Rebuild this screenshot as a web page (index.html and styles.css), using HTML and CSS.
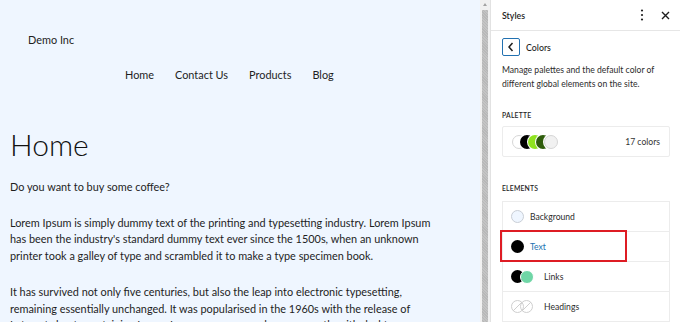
FILE: index.html
```html
<!DOCTYPE html>
<html lang="en">
<head>
    <meta charset="UTF-8">
    <title>Demo Inc - Styles</title>
    <link rel="stylesheet" href="styles.css">
</head>
<body>
    <div class="editor">
        <main class="canvas">
            <div class="site-title">Demo Inc</div>
            <nav class="site-nav">
                <a href="#">Home</a>
                <a href="#">Contact Us</a>
                <a href="#">Products</a>
                <a href="#">Blog</a>
            </nav>
            <h1 class="page-title">Home</h1>
            <p>Do you want to buy some coffee?</p>
            <p>Lorem Ipsum is simply dummy text of the printing and typesetting industry. Lorem Ipsum has been the industry's standard dummy text ever since the 1500s, when an unknown printer took a galley of type and scrambled it to make a type specimen book.</p>
            <p>It has survived not only five centuries, but also the leap into electronic typesetting, remaining essentially unchanged. It was popularised in the 1960s with the release of Letraset sheets containing Lorem Ipsum passages, and more recently with desktop publishing software.</p>
        </main>

        <div class="scrollbar">
            <div class="scroll-arrow"></div>
            <div class="scroll-thumb"></div>
        </div>

        <aside class="sidebar">
            <div class="sidebar-header">
                <span class="sidebar-title">Styles</span>
                <div class="header-actions">
                    <span class="kebab">
                        <svg width="4" height="12" viewBox="0 0 4 12"><circle cx="2" cy="1.5" r="1.1" fill="#1e1e1e"/><circle cx="2" cy="6" r="1.1" fill="#1e1e1e"/><circle cx="2" cy="10.5" r="1.1" fill="#1e1e1e"/></svg>
                    </span>
                    <span class="close">
                        <svg width="9" height="9" viewBox="0 0 9 9"><path d="M1 1 L8 8 M8 1 L1 8" stroke="#1e1e1e" stroke-width="1.4"/></svg>
                    </span>
                </div>
            </div>

            <div class="panel">
                <div class="panel-nav">
                    <button class="back-btn">
                        <svg width="8" height="10" viewBox="0 0 8 10"><path d="M5.5 1 L2 5 L5.5 9" fill="none" stroke="#1e1e1e" stroke-width="1.5"/></svg>
                    </button>
                    <span class="panel-title">Colors</span>
                </div>
                <p class="panel-desc">Manage palettes and the default color of different global elements on the site.</p>

                <div class="section-label">Palette</div>
                <div class="palette-box">
                    <div class="palette-swatches">
                        <span class="dot dot-white"></span>
                        <span class="dot dot-black"></span>
                        <span class="dot dot-lime"></span>
                        <span class="dot dot-forest"></span>
                        <span class="dot dot-light"></span>
                    </div>
                    <span class="palette-count">17 colors</span>
                </div>

                <div class="section-label elements-label">Elements</div>
                <div class="element-list">
                    <div class="element-row">
                        <span class="swatches single"><span class="sw sw-bg"></span></span>
                        <span class="element-name">Background</span>
                    </div>
                    <div class="element-row active">
                        <span class="swatches single"><span class="sw sw-black"></span></span>
                        <span class="element-name">Text</span>
                        <div class="highlight"></div>
                    </div>
                    <div class="element-row">
                        <span class="swatches double"><span class="sw sw-black"></span><span class="sw sw-mint"></span></span>
                        <span class="element-name">Links</span>
                    </div>
                    <div class="element-row">
                        <span class="swatches double">
                            <span class="sw sw-none"></span><span class="sw sw-none"></span>
                        </span>
                        <span class="element-name">Headings</span>
                    </div>
                </div>
            </div>
        </aside>
    </div>
</body>
</html>
```

FILE: styles.css
```css
* {
    margin: 0;
    padding: 0;
    box-sizing: border-box;
}

body {
    font-family: 'Lato', 'Open Sans', sans-serif;
    color: #1e1e1e;
    background: #fff;
    overflow: hidden;
}

.editor {
    display: flex;
    width: 680px;
    height: 322px;
}

/* left canvas */
.canvas {
    width: 480px;
    flex-shrink: 0;
    background: #eff6ff;
    padding: 33px 38px 0 10px;
    font-size: 10.9px;
    line-height: 16.7px;
    overflow: hidden;
}

.site-title {
    padding-left: 18px;
    line-height: 14px;
}

.site-nav {
    display: flex;
    gap: 21px;
    padding-left: 115px;
    margin-top: 21px;
    line-height: 14px;
}

.site-nav a {
    color: #1e1e1e;
    text-decoration: none;
}

.page-title {
    font-size: 30px;
    font-weight: 300;
    line-height: 36px;
    margin-top: 44px;
    margin-bottom: 17px;
    color: #111;
}

.canvas p {
    margin-bottom: 19px;
}

/* fake scrollbar */
.scrollbar {
    width: 10px;
    flex-shrink: 0;
    background: #f1f1f1;
    display: flex;
    flex-direction: column;
    align-items: center;
}

.scroll-arrow {
    width: 0;
    height: 0;
    margin-top: 3px;
    border-left: 2.5px solid transparent;
    border-right: 2.5px solid transparent;
    border-bottom: 3px solid #a3a3a3;
}

.scroll-thumb {
    width: 6px;
    flex: 1;
    margin-top: 4px;
    background: repeating-linear-gradient(45deg, #c4c4c4 0 1px, #b8b8b8 1px 2px);
}

/* sidebar */
.sidebar {
    flex: 1;
    border-left: 1px solid #e2e2e2;
    background: #fff;
    font-size: 8.6px;
}

.sidebar-header {
    height: 31px;
    border-bottom: 1px solid #e6e6e6;
    display: flex;
    align-items: center;
    justify-content: space-between;
    padding: 0 10px 0 11px;
}

.sidebar-title {
    font-weight: 600;
    font-size: 8.8px;
}

.header-actions {
    display: flex;
    align-items: center;
    gap: 17px;
}

.kebab, .close {
    display: flex;
}

.panel {
    padding: 7px 10px 0 11px;
}

.panel-nav {
    display: flex;
    align-items: center;
    gap: 6px;
}

.back-btn {
    width: 18px;
    height: 18px;
    border: 1.5px solid #2271b1;
    border-radius: 2px;
    background: #fff;
    display: flex;
    align-items: center;
    justify-content: center;
}

.panel-title {
    font-size: 8.8px;
    font-weight: 500;
}

.panel-desc {
    margin-top: 7px;
    line-height: 14px;
    color: #2c2c2c;
}

.section-label {
    margin-top: 19px;
    font-size: 6.8px;
    font-weight: 600;
    text-transform: uppercase;
    letter-spacing: 0.2px;
    line-height: 10px;
}

.palette-box {
    margin-top: 6px;
    height: 31px;
    border: 1px solid #ececec;
    border-radius: 2px;
    display: flex;
    align-items: center;
    justify-content: space-between;
    padding: 0 9px 0 9px;
}

.palette-swatches {
    display: flex;
}

.dot {
    width: 14px;
    height: 14px;
    border-radius: 50%;
    margin-left: -6px;
    box-shadow: 0 0 0 1px #fff;
}

.dot:first-child {
    margin-left: 0;
}

.dot-white {
    background: #fff;
    border: 1px solid #d6d6d6;
}

.dot-black {
    background: #000;
}

.dot-lime {
    background: #8fe31f;
}

.dot-forest {
    background: #2f5d0c;
}

.dot-light {
    background: #f1f1f1;
    border: 1px solid #d6d6d6;
}

.palette-count {
    color: #333;
    font-size: 8.6px;
}

.elements-label {
    margin-top: 26px;
}

.element-list {
    margin-top: 8px;
    border: 1px solid #ececec;
    border-bottom: none;
}

.element-row {
    position: relative;
    height: 30px;
    display: flex;
    align-items: center;
    padding-left: 8px;
    border-bottom: 1px solid #ececec;
    color: #2c2c2c;
}

.swatches {
    display: flex;
    align-items: center;
}

.swatches.single {
    width: 19px;
}

.swatches.double {
    width: 33px;
}

.sw {
    width: 13px;
    height: 13px;
    border-radius: 50%;
    display: inline-block;
}

.sw + .sw {
    margin-left: -4px;
}

.sw-bg {
    background: #eff6ff;
    border: 1px solid #c9ced6;
}

.sw-black {
    background: #000;
}

.sw-mint {
    background: #6fd6a6;
    border: 1px solid #fff;
    width: 14px;
    height: 14px;
}

.sw-none {
    border: 1px solid #cfcfcf;
    background: linear-gradient(135deg, transparent 47%, #cfcfcf 47%, #cfcfcf 53%, transparent 53%);
}

.element-row.active .element-name {
    color: #2271b1;
}

.highlight {
    position: absolute;
    left: -3px;
    top: -2px;
    width: 127px;
    height: 32px;
    border: 2px solid #de1c24;
}
```
